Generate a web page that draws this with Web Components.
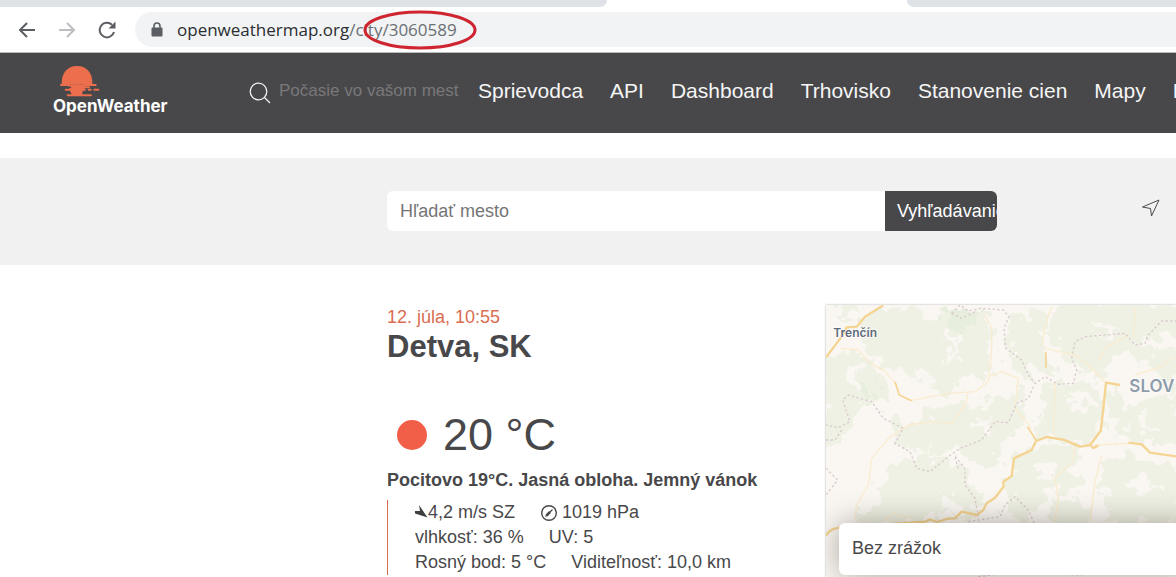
<!DOCTYPE html>
<html lang="sk">
<head>
<meta charset="utf-8">
<title>Detva, SK - OpenWeather</title>
<style>
body { margin: 0; min-height: 100vh; display: flex; flex-direction: column; background: #fff; color: #48484a; font-family: "Liberation Sans", Arial, sans-serif; font-size: 18px; overflow-x: hidden; }
city-page { flex: 1; }
</style>
</head>
<body>
<browser-bar host="openweathermap.org" path="/city/3060589"></browser-bar>
<site-header>
  <nav-link>Sprievodca</nav-link><nav-link>API</nav-link><nav-link>Dashboard</nav-link><nav-link>Trhovisko</nav-link><nav-link>Stanovenie cien</nav-link><nav-link>Mapy</nav-link><nav-link>Naše</nav-link>
</site-header>
<city-search></city-search>
<city-page>
  <current-weather slot="weather">
    <span slot="date">12. júla, 10:55</span>
    <span slot="city">Detva, SK</span>
    <span slot="temp">20 °C</span>
    <span slot="feels">Pocitovo 19°C. Jasná obloha. Jemný vánok</span>
  </current-weather>
  <rain-map slot="map">Bez zrážok</rain-map>
</city-page>

<script>
function define(name, html, setup) {
  const template = document.createElement('template');
  template.innerHTML = '<style>*{box-sizing:border-box}button,input{font:inherit;margin:0;border:0;background:none;padding:0;color:inherit}svg{display:block}</style>' + html;
  customElements.define(name, class extends HTMLElement {
    constructor() {
      super();
      this.attachShadow({ mode: 'open' }).append(template.content.cloneNode(true));
    }
    connectedCallback() { if (setup) setup(this, this.shadowRoot); }
  });
}

define('browser-bar', `
<style>
:host { display: block; border-bottom: 1px solid #b9bcbd; }
.tabs { display: flex; height: 7px; }
.tab { background: #dee1e6; }
.tab.left { width: 607px; border-bottom-right-radius: 8px; }
.tab.active { width: 300px; background: #fff; }
.tab.right { flex: 1; border-bottom-left-radius: 8px; }
.tools { display: flex; align-items: center; height: 45px; padding-left: 17px; }
button { width: 20px; height: 20px; margin-right: 20px; }
button:nth-of-type(3) { margin-right: 18px; }
.address { position: relative; flex: 1; display: flex; align-items: center; height: 35px; padding-left: 15px; gap: 13px; background: #f1f3f4; border-radius: 18px 0 0 18px; }
.url { font: 17px/24px "Open Sans", "Noto Sans", sans-serif; color: #6b6f73; white-space: nowrap; outline: 0; }
.host { color: #2b2d30; }
.mark { position: absolute; left: 226px; top: -8px; }
</style>
<div class="tabs"><div class="tab left"></div><div class="tab active"></div><div class="tab right"></div></div>
<div class="tools">
  <button aria-label="Späť"><svg width="20" height="20" viewBox="0 0 20 20" fill="none" stroke="#5b5e62" stroke-width="2"><path d="M18 10H4M10 3l-7 7 7 7"/></svg></button>
  <button aria-label="Dopredu"><svg width="20" height="20" viewBox="0 0 20 20" fill="none" stroke="#bcbec1" stroke-width="2"><path d="M2 10h14M10 3l7 7-7 7"/></svg></button>
  <button aria-label="Obnoviť"><svg width="20" height="20" viewBox="0 0 20 20" fill="none" stroke="#5b5e62" stroke-width="2"><path d="M17 12a7.300 7.300 0 1 1-2-7.200"/><path d="M18.500 1.500v7h-7z" fill="#5b5e62" stroke="none"/></svg></button>
  <div class="address">
    <svg width="14" height="16" viewBox="0 0 14 16"><path d="M4 6V4a3 3 0 0 1 6 0v2" fill="none" stroke="#5b5e62" stroke-width="1.600"/><rect x="1.500" y="5.500" width="11" height="9" rx="1" fill="#5b5e62"/></svg>
    <div class="url" role="textbox" contenteditable="plaintext-only" spellcheck="false" aria-label="Adresa"><span class="host"></span><span class="path"></span></div>
    <svg class="mark" width="118" height="50" viewBox="0 0 118 50"><ellipse cx="59" cy="26" rx="55" ry="18" fill="none" stroke="#cf2530" stroke-width="3"/></svg>
  </div>
</div>`, (el, root) => {
  root.querySelector('.host').textContent = el.getAttribute('host');
  root.querySelector('.path').textContent = el.getAttribute('path');
});

define('nav-link', `
<style>
:host { display: block; }
a { color: #f5f5f5; text-decoration: none; font-size: 21px; line-height: 28px; white-space: nowrap; }
</style>
<a href="#"><slot></slot></a>`);

define('ow-logo', `
<style>
:host { display: block; width: 120px; }
a { display: block; color: #fff; text-decoration: none; font: 700 17px/16px Inter, sans-serif; }
svg { margin-left: 6px; }
</style>
<a href="#">
  <svg width="42" height="33" viewBox="58 30 126 99"><g fill="#ec6e4c"><path d="M66 88C65 55 82 33 112 33S160 55 158 88z"/><path d="M82 88H138L126 122H98z"/></g><g stroke="#ec6e4c" stroke-width="6" stroke-linecap="round"><path d="M64 90H86M134 90H168M78 104H104M125 104H136M147 104H153M164 104H176M84 121H154M128 97H148"/></g><path d="M68 97H92M130 112H152" stroke="#48484a" stroke-width="5" stroke-linecap="round"/></svg>
  OpenWeather
</a>`);

define('site-header', `
<style>
:host { display: flex; align-items: center; height: 80px; padding-left: 53px; background: #48484a; overflow: hidden; }
ow-logo { flex: none; margin: 0 76px 8px 0; }
label { flex: none; display: flex; align-items: center; gap: 8px; width: 213px; margin-right: 16px; }
label svg { flex: none; }
input { width: 180px; height: 28px; margin-bottom: 4px; font-size: 17px; outline: 0; color: #fff; }
input::placeholder { color: #78787a; opacity: 1; }
nav { display: flex; gap: 27px; padding-bottom: 4px; }
</style>
<ow-logo></ow-logo>
<label aria-label="Počasie vo vašom meste"><svg width="22" height="22" viewBox="0 0 22 22" fill="none" stroke="#f2f2f2" stroke-width="1.300"><circle cx="9.500" cy="9.500" r="8.300"/><path d="M15.500 15.500l5.500 5.500"/></svg><input type="text" placeholder="Počasie vo vašom meste"></label>
<nav><slot></slot></nav>`);

define('city-search', `
<style>
:host { display: flex; align-items: center; box-sizing: border-box; margin-top: 25px; height: 107px; padding: 0 15px 2px 387px; background: #f1f1f1; }
form { display: flex; width: 610px; height: 40px; border-radius: 6px; overflow: hidden; background: #fff; }
input { flex: 1; min-width: 0; padding: 2px 13px 0; outline: 0; }
input::placeholder { color: #757575; opacity: 1; }
.go { width: 112px; padding: 2px 0 0 12px; background: #48484a; color: #fff; text-align: left; white-space: nowrap; overflow: hidden; }
.locate { margin-left: auto; margin-bottom: 6px; }
</style>
<form onsubmit="return false"><input type="text" aria-label="Hľadať mesto" placeholder="Hľadať mesto"><button class="go">Vyhľadávanie</button></form>
<button class="locate" aria-label="Moja poloha"><svg width="20" height="20" viewBox="0 0 20 20"><path d="M18 2L1.500 9l8 1.500L10.500 18z" fill="none" stroke="#4b4b4d"/></svg></button>`);

define('city-page', `
<style>
:host { display: flex; padding: 40px 0 0 387px; }
.weather { flex: 0 0 439px; padding-bottom: 2px; }
.map { flex: 1; min-width: 0; display: flex; }
</style>
<div class="weather"><slot name="weather"></slot></div><div class="map"><slot name="map"></slot></div>`);

define('current-weather', `
<style>
:host { display: block; }
.date { color: #db6d52; line-height: 24px; }
h2 { margin: 0 0 45px; font-size: 31px; line-height: 36px; }
.temp { display: flex; align-items: center; gap: 15px; height: 50px; padding-left: 10px; font-size: 45px; line-height: 50px; }
.feels { margin: 8px 0; font-weight: bold; font-size: 18px; line-height: 24px; white-space: nowrap; }
ul { margin: 0; padding: 0 0 0 27px; border-left: 1px solid #d66b4c; list-style: none; }
li { display: flex; gap: 25px; line-height: 25px; white-space: nowrap; }
li span { display: flex; align-items: center; }
</style>
<div class="date"><slot name="date"></slot></div>
<h2><slot name="city"></slot></h2>
<div class="temp"><svg width="31" height="31" viewBox="0 0 31 31"><circle cx="15" cy="15" r="15" fill="#f15f48"/></svg><slot name="temp"></slot></div>
<div class="feels"><slot name="feels"></slot></div>
<ul>
  <li><span><svg width="13" height="18" viewBox="0 0 13 18"><path d="M4 1L12.500 13.500L0 9.500L-1 7L5 7z" fill="#3f3f41"/></svg>4,2 m/s SZ</span><span><svg width="22" height="18" viewBox="0 0 22 18" fill="none" stroke="#48484a"><circle cx="9" cy="9" r="7.300" stroke-width="1.400"/><path d="M5.500 12.500l7-7" stroke-width="1.300"/><path d="M6.500 11.500l3.500-3.500" stroke-width="2.500"/></svg>1019 hPa</span></li>
  <li><span>vlhkosť: 36 %</span><span>UV: 5</span></li>
  <li><span>Rosný bod: 5 °C</span><span>Viditeľnosť: 10,0 km</span></li>
</ul>`);

define('rain-map', `
<style>
:host { position: relative; flex: 1; min-width: 0; display: block; background: #faf7f3; box-shadow: 0 0 2px rgba(0,0,0,.35); }
.chart { position: absolute; inset: 0; width: 100%; height: 100%; }
.note { position: absolute; left: 13px; right: -20px; bottom: 2px; padding: 13px 13px 15px; line-height: 24px; background: #fff; border-radius: 6px; box-shadow: 0 0 30px rgba(60,45,30,.42); }
.clip { position: absolute; inset: 0; overflow: hidden; }
text { font-family: Inter, sans-serif; }
</style>
<div class="clip">
<svg class="chart" viewBox="33 30 1050 816" preserveAspectRatio="xMinYMin slice" fill="none" stroke-linejoin="round">
  <defs>
    <filter id="rough" x="-10%" y="-10%" width="120%" height="120%"><feTurbulence type="fractalNoise" baseFrequency=".022" numOctaves="3" seed="8"/><feDisplacementMap in="SourceGraphic" scale="110" xChannelSelector="R" yChannelSelector="G"/><feGaussianBlur stdDeviation="1.500"/></filter>
  </defs>
  <g fill="#eef1e4" filter="url(#rough)">
    <path d="M190 30L370 60 510 50 540 200 510 260 430 260 400 310 330 260 250 230 170 190 130 90zM720 20H1100V140L1000 120 1010 200 920 170 850 250 790 220 700 120zM20 190L110 160 200 240 220 320 120 320 90 430 20 470z"/>
    <path d="M440 330L520 320 620 270 630 370 570 450 500 510 430 470 370 490 300 400 360 340zM230 500L330 480 450 520 500 600 480 690 390 660 290 700 180 610zM600 490L700 440 810 460 780 570 670 610 650 700 560 640zM680 270L830 260 870 330 840 440 700 430zM890 260L950 330 1100 280V460L980 430 900 440zM850 500L960 480 1100 540V700L890 680zM570 70L690 50 690 180 740 240 600 230zM240 370L330 400 340 480 260 460zM120 650L210 610 260 680 140 710zM1000 180L1090 160V270L1010 270z"/>
    <path d="M60 40l50-10 20 30-60 15zM640 420l40-60 20 60zM700 620l90-20 30 80-100 20zM500 440l60 10-10 60-60-10zM40 340l50 10-10 60-50 10z"/>
  </g>
  <path d="M280 200l40 10 20 50-50-20zM400 120l20-20 10 90-20 20zM840 80l60 20-40 30zM760 320l50-20 10 30-40 30zM380 590l40 10 10 70-50-20zM650 530l50-30 20 20-50 50zM950 570l70-20 20 30-70 20zM470 380l60-20-20 50zM100 220l40 10 0 50-30-10zM940 380l60-10 30 30-60 10z" fill="#faf7f3" filter="url(#rough)"/>
  <path d="M390 50L480 35 520 60 430 110 380 90zM145 250L180 290 170 325 145 300z" fill="#e7eedd" filter="url(#rough)"/>
  <g stroke="#faecd0" stroke-width="4"><path d="M75 160L130 165 160 200 210 230 245 270M290 316L400 295 480 290 520 260 530 170 530 100 510 60M520 245L560 230 610 250 600 340 650 400M120 670L125 630 160 570 170 490 220 430 280 390 350 380 410 385 450 330 460 290M710 35L690 90 682 150M690 160L780 180 820 210 870 260M850 200L870 160 940 120M720 260L715 420M860 480L840 560 825 680M780 440L775 500 720 550 730 610 720 680M960 40L955 130M960 240L1040 215 1070 190M835 450L940 445M210 675L235 655 290 670"/></g>
  <g stroke="#f5d491" stroke-width="7"><path d="M33 187L80 125 95 97 125 95 150 65 205 31M33 722Q45 700 75 698L330 680 345 673 365 681 400 671 420 670 440 650 485 660 505 645 515 625 540 608 566 575 565 560 590 543 597 490 650 465 663 438 695 426 745 434 795 455 825 450 857 408 865 340 873 263 915 270M940 443L980 448 1005 473 1083 484M825 450L835 459 850 452"/></g>
  <path d="M240 260L253 300 290 317M637 395L663 435M692 170L693 218" stroke="#f5d491" stroke-width="5"/>
  <g stroke="#d9cacf" stroke-width="4" stroke-dasharray="7 7"><path d="M410 55L435 30 460 48 500 40 565 45 582 65 567 100 572 160 620 195 640 240 660 265 690 245 730 268 775 265 785 225 770 190 780 140 810 125 930 115 960 150 990 145 1000 120 1040 78H1083M410 55L440 70 480 50M655 275L640 310 605 325 580 383 540 380 500 435 435 460 400 485 345 530 305 520 285 470 240 445 265 400 205 370 170 320 100 300 83 315 105 380 70 398 33 390M33 435L60 435 80 405M33 520L68 555 33 600M420 485L450 520 450 570 480 610 490 665M430 520L420 490M460 680L555 665 570 630 600 605 640 645 660 690M490 845L600 830 800 840"/></g>
  <text x="55" y="127" font-size="36" font-weight="600" fill="#5d6b7b" stroke="#fff" stroke-width="3" paint-order="stroke">Trenčín</text>
  <text x="943" y="290" font-size="51" font-weight="600" fill="#8e9cab" stroke="#fff" stroke-width="3" paint-order="stroke">SLOV</text>
</svg>
<div class="note"><slot></slot></div>
</div>`);
</script>
</body>
</html>
